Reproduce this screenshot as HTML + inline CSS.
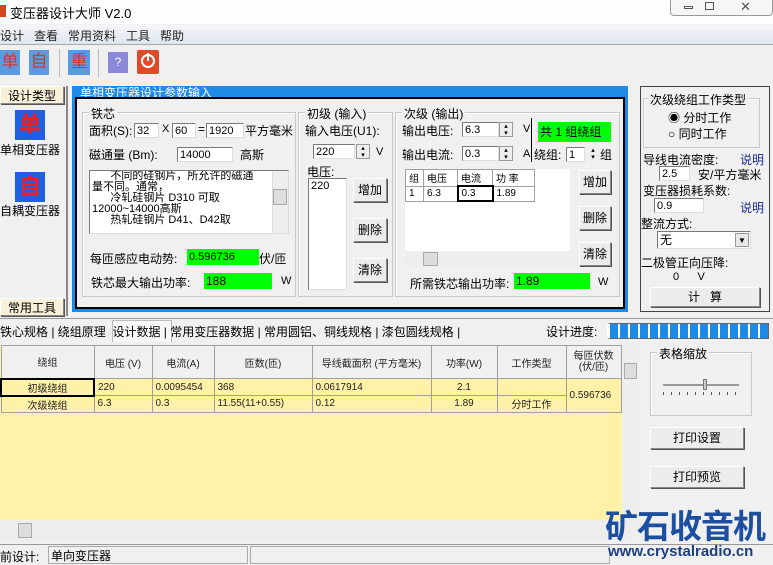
<!DOCTYPE html><html><head><meta charset="utf-8"><style>
*{margin:0;padding:0;box-sizing:border-box}
body{width:773px;height:564px;overflow:hidden;background:#f0f0f0;font-family:"Liberation Sans","Noto Sans CJK SC",sans-serif;font-size:12px;color:#000;position:relative}
.a{position:absolute;white-space:nowrap}
.in{position:absolute;background:#fff;border:1px solid #7a7a7a;border-right-color:#ddd;border-bottom-color:#ddd;font-size:11px;padding-left:2px;line-height:14px}
.btn{position:absolute;background:#ececec;border:1px solid #888;border-top-color:#fff;border-left-color:#fff;box-shadow:1px 1px 0 #555;text-align:center;font-size:12px}
.grp{position:absolute;border:1px solid #c8c8c8;box-shadow:inset 1px 1px 0 #fff}
.gl{position:absolute;top:-8px;left:6px;background:#f0f0f0;padding:0 2px;font-size:12px}
.green{position:absolute;background:#00ff00;font-size:11px;padding-left:2px;line-height:16px}
.spin{position:absolute;width:14px;border:1px solid #999;background:#eee;font-size:7px;line-height:7px;text-align:center}
td,th{border:1px solid #a0a0a0;font-weight:normal;font-size:10px;padding:0 3px;white-space:nowrap;overflow:hidden}
</style></head><body>
<div class="a" style="left:0;top:0;width:773px;height:24px;background:#fbfdff"></div>
<div class="a" style="left:0;top:5px;width:6px;height:12px;background:#d04a20"></div>
<div class="a" style="left:10px;top:3px;font-size:13px">变压器设计大师 V2.0</div>
<div class="a" style="left:670px;top:0;width:103px;height:16px;border:1px solid #999;border-top:none;border-radius:0 0 4px 4px;background:#f4f6f8"></div>
<div class="a" style="left:684px;top:6px;width:9px;height:3px;border:1px solid #555"></div>
<div class="a" style="left:705px;top:2px;width:9px;height:8px;border:1px solid #555"></div>
<div class="a" style="left:740px;top:-1px;font-size:13px;color:#555">✕</div>
<div class="a" style="left:0;top:25px;width:773px;height:20px;background:linear-gradient(#f4f7fb,#dfe6ee);border-bottom:1px solid #aaa"></div>
<div class="a" style="left:0;top:27px;color:#222">设计 &nbsp;&nbsp;查看 &nbsp;&nbsp;常用资料 &nbsp;&nbsp;工具 &nbsp;&nbsp;帮助</div>
<div class="a" style="left:0;top:50px;width:20px;height:25px;background:#5a9ae0;color:#e03030;font-size:17px;text-align:center;line-height:24px">单</div>
<div class="a" style="left:29px;top:50px;width:20px;height:25px;background:#5a9ae0;color:#e03030;font-size:17px;text-align:center;line-height:24px">自</div>
<div class="a" style="left:59px;top:49px;width:1px;height:28px;background:#bbb"></div>
<div class="a" style="left:68px;top:50px;width:22px;height:25px;background:#5a9ae0;color:#e03030;font-size:17px;text-align:center;line-height:24px">重</div>
<div class="a" style="left:98px;top:49px;width:1px;height:28px;background:#bbb"></div>
<div class="a" style="left:108px;top:52px;width:20px;height:21px;background:#8a88d8;color:#fff;font-size:12px;text-align:center;line-height:20px">?</div>
<div class="a" style="left:137px;top:50px;width:22px;height:24px;background:#e04a2a;border-radius:2px"></div>
<div class="a" style="left:141px;top:54px;width:14px;height:14px;border:2px solid #fff;border-radius:50%"></div>
<div class="a" style="left:147px;top:53px;width:2px;height:8px;background:#fff"></div>
<div class="btn" style="left:0;top:86px;width:64px;height:18px;background:#f8f0d8">设计类型</div>
<div class="a" style="left:66px;top:86px;width:2px;height:230px;background:#888"></div>
<div class="a" style="left:15px;top:110px;width:30px;height:30px;background:#2060e0;color:#f02020;font-size:22px;font-weight:bold;text-align:center;line-height:30px">单</div>
<div class="a" style="left:0;top:141px">单相变压器</div>
<div class="a" style="left:15px;top:172px;width:30px;height:30px;background:#2060e0;color:#f02020;font-size:22px;font-weight:bold;text-align:center;line-height:30px">自</div>
<div class="a" style="left:0;top:202px">自耦变压器</div>
<div class="btn" style="left:0;top:298px;width:64px;height:18px;background:#f8f0d8">常用工具</div>
<div class="a" style="left:72px;top:86px;width:556px;height:226px;border:3px solid #1e8ae6;background:#1e8ae6"></div>
<div class="a" style="left:80px;top:84px;color:#fff;font-size:12px">单相变压器设计参数输入</div>
<div class="a" style="left:75px;top:97px;width:550px;height:212px;background:#f0f0f0;border:2px solid #000"></div>
<div class="grp" style="left:82px;top:112px;width:214px;height:185px"><span class="gl">铁芯</span></div>
<div class="a" style="left:89px;top:122px">面积(S):</div>
<div class="in" style="left:134px;top:123px;width:25px;height:15px">32</div>
<div class="a" style="left:162px;top:123px;font-size:11px">X</div>
<div class="in" style="left:172px;top:123px;width:24px;height:15px">60</div>
<div class="a" style="left:198px;top:122px">=</div>
<div class="in" style="left:206px;top:123px;width:38px;height:15px">1920</div>
<div class="a" style="left:245px;top:122px">平方毫米</div>
<div class="a" style="left:89px;top:146px">磁通量 (Bm):</div>
<div class="in" style="left:177px;top:147px;width:56px;height:15px">14000</div>
<div class="a" style="left:240px;top:146px">高斯</div>
<div class="in" style="left:89px;top:170px;width:200px;height:64px;font-size:11px;line-height:11px;overflow:hidden;white-space:pre">      不同的硅钢片，所允许的磁通
量不同。通常，
      冷轧硅钢片 D310 可取
12000~14000高斯
      热轧硅钢片 D41、D42取</div>
<div class="a" style="left:272px;top:171px;width:16px;height:62px;background:#eee;border-left:1px solid #ddd"></div>
<div class="a" style="left:273px;top:189px;width:14px;height:16px;background:#ddd;border:1px solid #aaa"></div>
<div class="a" style="left:90px;top:250px">每匝感应电动势:</div>
<div class="green" style="left:187px;top:249px;width:72px">0.596736</div>
<div class="a" style="left:259px;top:250px">伏/匝</div>
<div class="a" style="left:91px;top:274px">铁芯最大输出功率:</div>
<div class="green" style="left:204px;top:273px;width:68px;font-size:12px">188</div>
<div class="a" style="left:281px;top:275px;font-size:11px">W</div>
<div class="grp" style="left:298px;top:112px;width:95px;height:185px"><span class="gl">初级 (输入)</span></div>
<div class="a" style="left:305px;top:122px">输入电压(U1):</div>
<div class="in" style="left:313px;top:144px;width:42px;height:15px">220</div>
<div class="spin" style="left:356px;top:144px;height:15px">▴<br>▾</div>
<div class="a" style="left:376px;top:146px;font-size:11px">V</div>
<div class="a" style="left:307px;top:163px">电压:</div>
<div class="in" style="left:308px;top:178px;width:39px;height:112px">220</div>
<div class="btn" style="left:353px;top:178px;width:34px;height:24px;line-height:22px">增加</div>
<div class="btn" style="left:353px;top:218px;width:34px;height:24px;line-height:22px">删除</div>
<div class="btn" style="left:353px;top:258px;width:34px;height:24px;line-height:22px">清除</div>
<div class="grp" style="left:395px;top:112px;width:225px;height:185px"><span class="gl">次级 (输出)</span></div>
<div class="a" style="left:402px;top:122px">输出电压:</div>
<div class="in" style="left:462px;top:122px;width:37px;height:15px">6.3</div>
<div class="spin" style="left:499px;top:122px;height:15px">▴<br>▾</div>
<div class="a" style="left:523px;top:123px;font-size:11px">V</div>
<div class="a" style="left:531px;top:118px;width:1px;height:44px;background:#000"></div>
<div class="green" style="left:538px;top:122px;width:73px;height:20px;font-size:12px;line-height:20px">共 1 组绕组</div>
<div class="a" style="left:402px;top:146px">输出电流:</div>
<div class="in" style="left:462px;top:146px;width:37px;height:15px">0.3</div>
<div class="spin" style="left:499px;top:146px;height:15px">▴<br>▾</div>
<div class="a" style="left:523px;top:148px;font-size:11px">A</div>
<div class="a" style="left:534px;top:146px">绕组:</div>
<div class="in" style="left:566px;top:147px;width:19px;height:15px">1</div>
<div class="spin" style="left:586px;top:147px;height:15px;border:none">▴<br>▾</div>
<div class="a" style="left:600px;top:146px">组</div>
<div class="a" style="left:405px;top:169px;width:165px;height:82px;background:#fff"></div>
<table class="a" style="left:405px;top:169px;border-collapse:collapse;background:#fff">
<tr style="height:15px"><td style="width:18px">组</td><td style="width:34px">电压</td><td style="width:35px">电流</td><td style="width:42px">功 率</td></tr>
<tr style="height:15px"><td>1</td><td>6.3</td><td style="border:2px solid #000">0.3</td><td>1.89</td></tr></table>
<div class="a" style="left:405px;top:251px;width:174px;height:16px;background:#eee"></div>
<div class="a" style="left:423px;top:252px;width:15px;height:14px;background:#ddd;border:1px solid #aaa"></div>
<div class="btn" style="left:579px;top:170px;width:32px;height:24px;line-height:22px">增加</div>
<div class="btn" style="left:579px;top:206px;width:32px;height:24px;line-height:22px">删除</div>
<div class="btn" style="left:579px;top:242px;width:32px;height:24px;line-height:22px">清除</div>
<div class="a" style="left:410px;top:275px">所需铁芯输出功率:</div>
<div class="green" style="left:514px;top:273px;width:76px;font-size:12px">1.89</div>
<div class="a" style="left:598px;top:276px;font-size:11px">W</div>
<div class="a" style="left:640px;top:86px;width:130px;height:226px;border:1px solid #444"></div>
<div class="grp" style="left:643px;top:98px;width:117px;height:50px"><span class="gl" style="left:4px">次级绕组工作类型</span></div>
<div class="a" style="left:668px;top:109px">◉ 分时工作</div>
<div class="a" style="left:668px;top:125px">○ 同时工作</div>
<div class="a" style="left:643px;top:151px">导线电流密度:</div>
<div class="a" style="left:740px;top:151px;color:#1a2a90">说明</div>
<div class="in" style="left:659px;top:166px;width:31px;height:15px">2.5</div>
<div class="a" style="left:698px;top:166px">安/平方毫米</div>
<div class="a" style="left:643px;top:182px">变压器损耗系数:</div>
<div class="in" style="left:654px;top:198px;width:50px;height:15px">0.9</div>
<div class="a" style="left:740px;top:199px;color:#1a2a90">说明</div>
<div class="a" style="left:641px;top:215px">整流方式:</div>
<div class="in" style="left:657px;top:231px;width:94px;height:18px;font-size:12px;line-height:16px">无</div>
<div class="a" style="left:735px;top:233px;width:14px;height:14px;background:#e8e8e8;border:1px solid #999;font-size:8px;text-align:center;line-height:13px">▼</div>
<div class="a" style="left:641px;top:254px">二极管正向压降:</div>
<div class="a" style="left:673px;top:271px;font-size:11px">0 &nbsp;&nbsp;&nbsp;&nbsp;&nbsp;V</div>
<div class="btn" style="left:650px;top:287px;width:110px;height:20px;line-height:18px">计 &nbsp;&nbsp;算</div>
<div class="a" style="left:0;top:318px;width:773px;height:1px;background:#999"></div>
<div class="a" style="left:112px;top:320px;width:60px;height:22px;background:#f8f8f8;border:1px solid #bbb;border-bottom:none"></div>
<div class="a" style="left:0;top:323px;font-size:12px">铁心规格 | 绕组原理 &nbsp;设计数据 | 常用变压器数据 | 常用圆铝、铜线规格 | 漆包圆线规格 |</div>
<div class="a" style="left:546px;top:323px">设计进度:</div>
<div class="a" style="left:607px;top:323px;width:162px;height:16px;border:1px solid #666;background:repeating-linear-gradient(90deg,#1e8ae6 0 8px,#fff 8px 10px);border-left:3px solid #fff"></div>
<div class="a" style="left:0;top:345px;width:622px;height:175px;background:#fff2a8"></div>
<table class="a" style="left:0;top:345px;width:620px;table-layout:fixed;border-collapse:collapse;background:#fff2a8;color:#222">
<colgroup><col style="width:93px"><col style="width:58px"><col style="width:62px"><col style="width:98px"><col style="width:119px"><col style="width:66px"><col style="width:69px"><col style="width:55px"></colgroup>
<tr style="height:33px;background:#f0f0f0;text-align:center"><td>绕组</td><td>电压 (V)</td><td>电流(A)</td><td>匝数(匝)</td><td>导线截面积 (平方毫米)</td><td>功率(W)</td><td>工作类型</td><td style="line-height:11px">每匝伏数<br>(伏/匝)</td></tr>
<tr style="height:17px"><td style="text-align:center;border:2px solid #000">初级绕组</td><td>220</td><td>0.0095454</td><td>368</td><td>0.0617914</td><td style="text-align:center">2.1</td><td></td><td rowspan="2">0.596736</td></tr>
<tr style="height:16px"><td style="text-align:center">次级绕组</td><td>6.3</td><td>0.3</td><td>11.55(11+0.55)</td><td>0.12</td><td style="text-align:center">1.89</td><td style="text-align:center">分时工作</td></tr></table>
<div class="a" style="left:622px;top:345px;width:16px;height:175px;background:#eee"></div>
<div class="a" style="left:624px;top:363px;width:13px;height:16px;background:#ddd;border:1px solid #aaa"></div>
<div class="a" style="left:0;top:520px;width:638px;height:21px;background:#eee"></div>
<div class="a" style="left:18px;top:523px;width:14px;height:15px;background:#ddd;border:1px solid #aaa"></div>
<div class="grp" style="left:650px;top:352px;width:102px;height:64px"><span class="gl">表格缩放</span></div>
<div class="a" style="left:663px;top:384px;width:76px;height:2px;background:#999"></div>
<div class="a" style="left:703px;top:379px;width:4px;height:11px;background:#ccc;border:1px solid #777"></div>
<div class="a" style="left:663px;top:392px;width:76px;height:3px;background:repeating-linear-gradient(90deg,#555 0 1px,transparent 1px 8px)"></div>
<div class="btn" style="left:650px;top:427px;width:94px;height:22px;line-height:20px">打印设置</div>
<div class="btn" style="left:650px;top:466px;width:94px;height:22px;line-height:20px">打印预览</div>
<div class="a" style="left:0;top:544px;width:773px;height:1px;background:#999"></div>
<div class="a" style="left:0;top:548px">前设计:</div>
<div class="a" style="left:48px;top:546px;width:200px;height:18px;border:1px solid #aaa;padding-left:2px">单向变压器</div>
<div class="a" style="left:250px;top:546px;width:360px;height:18px;border:1px solid #aaa"></div>
<div class="a" style="left:605px;top:500px;font-size:33px;font-weight:bold;color:#1d4fa0;letter-spacing:-1px">矿石收音机</div>
<div class="a" style="left:608px;top:543px;font-size:15px;font-weight:bold;color:#1d3f80">www.crystalradio.cn</div>
</body></html>
